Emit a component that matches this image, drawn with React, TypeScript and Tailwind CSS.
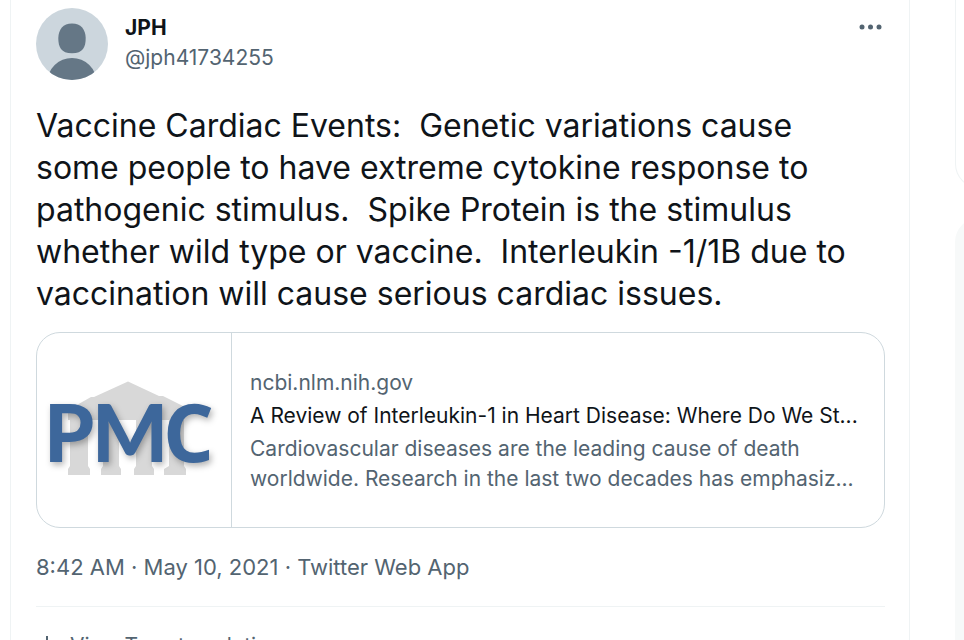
const BODY_LINES = [
    'Vaccine Cardiac Events:  Genetic variations cause',
    'some people to have extreme cytokine response to',
    'pathogenic stimulus.  Spike Protein is the stimulus',
    'whether wild type or vaccine.  Interleukin -1/1B due to',
    'vaccination will cause serious cardiac issues.',
];

function Avatar() {
    return (
        <svg className="w-[72px] h-[72px] shrink-0" viewBox="0 0 72 72" role="img" aria-label="JPH">
            <defs>
                <clipPath id="avatar-clip">
                    <circle cx="36" cy="36" r="36" />
                </clipPath>
            </defs>
            <g clipPath="url(#avatar-clip)">
                <rect width="72" height="72" fill="#ccd6dd" />
                <path d="M36 15.500c9 0 13.500 6 13.700 14.500 0 9-2.700 15.300-13.700 15.300S22.300 39 22.300 30C22.500 21.500 27 15.500 36 15.500z" fill="#657786" />
                <ellipse cx="36" cy="74" rx="24.500" ry="24" fill="#657786" />
            </g>
        </svg>
    );
}

function PmcLogo() {
    return (
        <svg className="w-full h-full" viewBox="0 0 194 194" role="img" aria-label="PMC">
            <g fill="#d8d8d8">
                <path d="M91 48.500L122 63h4l20 10v14H31V77l23-13h3z" />
                <path d="M33 87h18v46l2 3v6H31v-6l2-3zM66 87h16v46l2 3v6H64v-6l2-3zM99 87h16v46l2 3v6H97v-6l2-3zM132 87h15v46l2 3v6h-22v-6l5-3z" />
            </g>
            <g fill="#3d679b" className="drop-shadow-[2px_3px_3px_rgba(0,0,0,0.3)]">
                <text x="7 55" y="129" fontSize="80" className="font-['Lato',sans-serif] font-black">
                    PM
                </text>
                <text x="126" y="129" fontSize="80" className="font-['Open_Sans',sans-serif] font-bold">
                    C
                </text>
            </g>
        </svg>
    );
}

function LinkCard() {
    return (
        <a href="#article" className="mt-[17px] flex h-[196px] overflow-hidden rounded-3xl border border-[#cfd9de]">
            <div className="w-[195px] shrink-0 border-r border-[#cfd9de]">
                <PmcLogo />
            </div>
            <div className="flex min-w-0 flex-1 flex-col justify-center gap-[3px] px-[18px] pt-[2px] text-[21px] leading-[30px] text-[#536471]">
                <p>ncbi.nlm.nih.gov</p>
                <p className="whitespace-nowrap text-[#0f1419]">A Review of Interleukin-1 in Heart Disease: Where Do We St...</p>
                <p className="whitespace-nowrap">
                    Cardiovascular diseases are the leading cause of death
                    <br />
                    worldwide. Research in the last two decades has emphasiz...
                </p>
            </div>
        </a>
    );
}

export default function App() {
    return (
        <div className="flex h-screen overflow-hidden bg-white font-['Inter','Liberation_Sans',sans-serif] text-[#0f1419]">
            <main className="ml-[10px] min-w-0 flex-1 border-x border-[#eff3f4] pl-[25px] pr-6">
                <article className="pt-2">
                    <header className="flex items-start">
                        <Avatar />
                        <div className="ml-[17px] mt-[5px] flex-1 text-[21px] leading-[30px]">
                            <p className="font-bold">JPH</p>
                            <p className="text-[#536471]">@jph41734255</p>
                        </div>
                        <button type="button" aria-label="More" className="mt-2 text-[#536471]">
                            <svg className="w-7 h-6" viewBox="0 0 28 24" fill="currentColor">
                                <circle cx="5" cy="11" r="2.500" />
                                <circle cx="13.500" cy="11" r="2.500" />
                                <circle cx="22" cy="11" r="2.500" />
                            </svg>
                        </button>
                    </header>

                    <p className="mt-[25px] whitespace-pre text-[32px] leading-[42px]">{BODY_LINES.join('\n')}</p>

                    <LinkCard />

                    <p className="mt-6 text-[22px] leading-[30px] text-[#536471]">8:42 AM · May 10, 2021 · Twitter Web App</p>

                    <div className="mt-6 flex items-center gap-2.5 border-t border-[#eff3f4] pt-6 text-[21px] leading-[30px] text-[#536471]">
                        <svg className="w-6 h-6" viewBox="0 0 24 24" fill="none" stroke="currentColor" strokeWidth="2">
                            <path d="M11 2v20M5 12v10M17 8v14" />
                        </svg>
                        <a href="#analytics">View Tweet analytics</a>
                    </div>
                </article>
            </main>

            <aside className="flex w-[54px] flex-col gap-[30px] overflow-hidden pl-[45px]">
                <div className="h-[188px] w-[350px] rounded-b-3xl border border-t-0 border-[#eff3f4]" />
                <div className="w-[350px] flex-1 rounded-t-3xl bg-[#f7f9f9]" />
            </aside>
        </div>
    );
}
